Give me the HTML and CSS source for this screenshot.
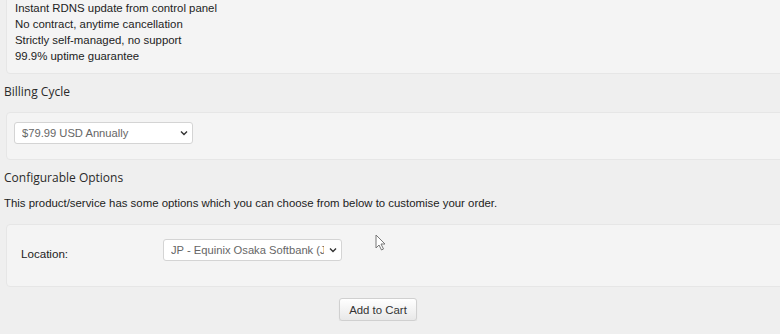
FILE: index.html
```html
<!DOCTYPE html>
<html lang="en">
<head>
    <meta charset="UTF-8">
    <meta name="viewport" content="width=device-width, initial-scale=1.0">
    <link rel="stylesheet" href="styles.css">
</head>
<body>
    <div class="order-page">
        <div class="panel features">
            <div>Instant RDNS update from control panel</div>
            <div>No contract, anytime cancellation</div>
            <div>Strictly self-managed, no support</div>
            <div>99.9% uptime guarantee</div>
        </div>

        <h3 class="section-title">Billing Cycle</h3>
        <div class="panel billing">
            <div class="select-wrap">
                <select class="field">
                    <option>$79.99 USD Annually</option>
                </select>
                <svg class="chevron" width="8" height="6" viewBox="0 0 8 6"><path d="M1 1.5 L4 4.5 L7 1.5" fill="none" stroke="#333" stroke-width="1.4"/></svg>
            </div>
        </div>

        <h3 class="section-title">Configurable Options</h3>
        <p class="section-note">This product/service has some options which you can choose from below to customise your order.</p>
        <div class="panel options">
            <label class="option-label" for="location">Location:</label>
            <div class="select-wrap">
                <select class="field" id="location">
                    <option>JP - Equinix Osaka Softbank (JP)</option>
                </select>
                <svg class="chevron" width="8" height="6" viewBox="0 0 8 6"><path d="M1 1.5 L4 4.5 L7 1.5" fill="none" stroke="#333" stroke-width="1.4"/></svg>
            </div>
        </div>

        <div class="actions">
            <button type="button" class="cart-btn">Add to Cart</button>
        </div>
    </div>

    <!-- mouse pointer captured in the screenshot -->
    <svg class="pointer" width="12" height="18" viewBox="0 0 12 18">
        <path d="M1 1 L1 14 L4 11 L6.5 16 L8.5 15 L6 10 L10 10 Z" fill="#fff" stroke="#777" stroke-width="1"/>
    </svg>
</body>
</html>
```

FILE: styles.css
```css
body {
    margin: 0;
    background-color: #efefef;
    font-family: "Liberation Sans", Arial, sans-serif;
    font-size: 11.4px;
    color: #222;
    overflow: hidden;
}

.order-page {
    width: 900px;
    padding-left: 4px;
}

.panel {
    margin-left: 2px;
    background-color: #f4f4f4;
    border: 1px solid #e6e6e6;
    border-radius: 4px;
}

.features {
    margin-top: -10px;
    padding: 9px 8px 9px 8px;
    line-height: 16px;
}

.section-title {
    margin: 8px 0 10px 0;
    font-family: "Open Sans", sans-serif;
    font-weight: normal;
    font-size: 12px;
    line-height: 20px;
    color: #2a2a2a;
}

.section-note {
    margin: -3px 0 13px 0;
    line-height: 16px;
}

.billing {
    padding: 9px 7px 15px 7px;
}

.select-wrap {
    position: relative;
    width: 179px;
    height: 22px;
}

.field {
    appearance: none;
    width: 100%;
    height: 22px;
    border: 1px solid #d4d4d4;
    border-radius: 3px;
    background-color: #fff;
    font-family: "Liberation Sans", Arial, sans-serif;
    font-size: 11.2px;
    color: #666;
    padding: 0 17px 0 7px;
    text-overflow: clip;
}

.chevron {
    position: absolute;
    right: 5px;
    top: 8px;
    pointer-events: none;
}

.options {
    display: grid;
    grid-template-columns: 142px 179px;
    align-items: start;
    padding: 14px 14px 24px 14px;
}

.option-label {
    margin-top: 7px;
    line-height: 16px;
    font-size: 11.6px;
}

.actions {
    width: 748px;
    text-align: center;
    padding-top: 11px;
}

.cart-btn {
    height: 23px;
    width: 78px;
    padding: 0;
    font-family: "Liberation Sans", Arial, sans-serif;
    font-size: 11.4px;
    color: #333;
    background: linear-gradient(#fff, #e8e8e8);
    border: 1px solid #d0d0d0;
    border-radius: 3px;
    box-shadow: 0 1px 1px rgba(0, 0, 0, 0.08);
}

.pointer {
    position: absolute;
    left: 375px;
    top: 234px;
}
```
